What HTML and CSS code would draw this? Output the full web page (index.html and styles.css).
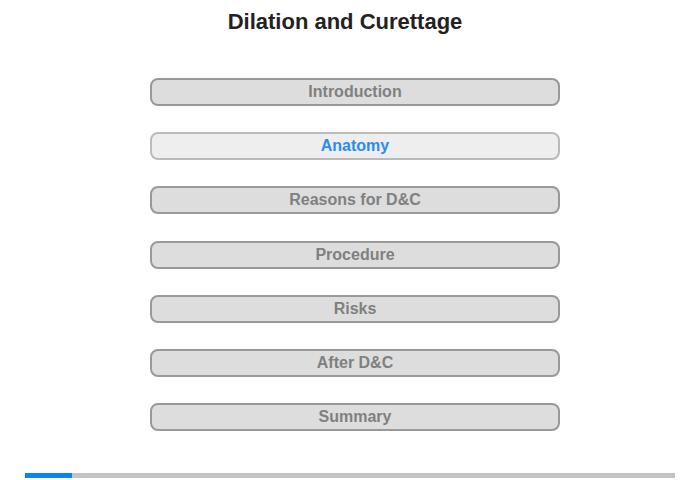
FILE: index.html
```html
<!DOCTYPE html>
<html>
<head>
<meta charset="utf-8">
<link rel="stylesheet" href="styles.css">
</head>
<body>
<div class="page">
  <h1 class="title">Dilation and Curettage</h1>
  <nav class="menu">
    <div class="item">Introduction</div>
    <div class="item active">Anatomy</div>
    <div class="item">Reasons for D&amp;C</div>
    <div class="item">Procedure</div>
    <div class="item">Risks</div>
    <div class="item">After D&amp;C</div>
    <div class="item">Summary</div>
  </nav>
  <div class="progress"><div class="progress-fill" style="width:47px"></div></div>
</div>
</body>
</html>
```
FILE: styles.css
```css
html, body {
  margin: 0;
  padding: 0;
  background: #fff;
}
.page {
  width: 700px;
  height: 480px;
  font-family: "Liberation Sans", Arial, sans-serif;
  display: flex;
  flex-direction: column;
  align-items: center;
}
.title {
  margin: 9px 10px 0 0;
  font-size: 22px;
  font-weight: bold;
  line-height: 26px;
  color: #222;
}
.menu {
  margin-top: 43px;
  margin-left: 10px;
  display: flex;
  flex-direction: column;
  gap: 26.2px;
}
.item {
  box-sizing: border-box;
  width: 410px;
  height: 28px;
  border: 2px solid #999;
  border-radius: 8px;
  background: #ddd;
  color: #808080;
  font-size: 16px;
  font-weight: bold;
  line-height: 24px;
  text-align: center;
}
.item.active {
  border-color: #bbb;
  background: #eee;
  color: #2a8cf0;
}
.progress {
  margin-top: 42px;
  width: 650px;
  height: 5px;
  background: #c4c4c4;
}
.progress-fill {
  height: 5px;
  background: #0a84f5;
}
```
